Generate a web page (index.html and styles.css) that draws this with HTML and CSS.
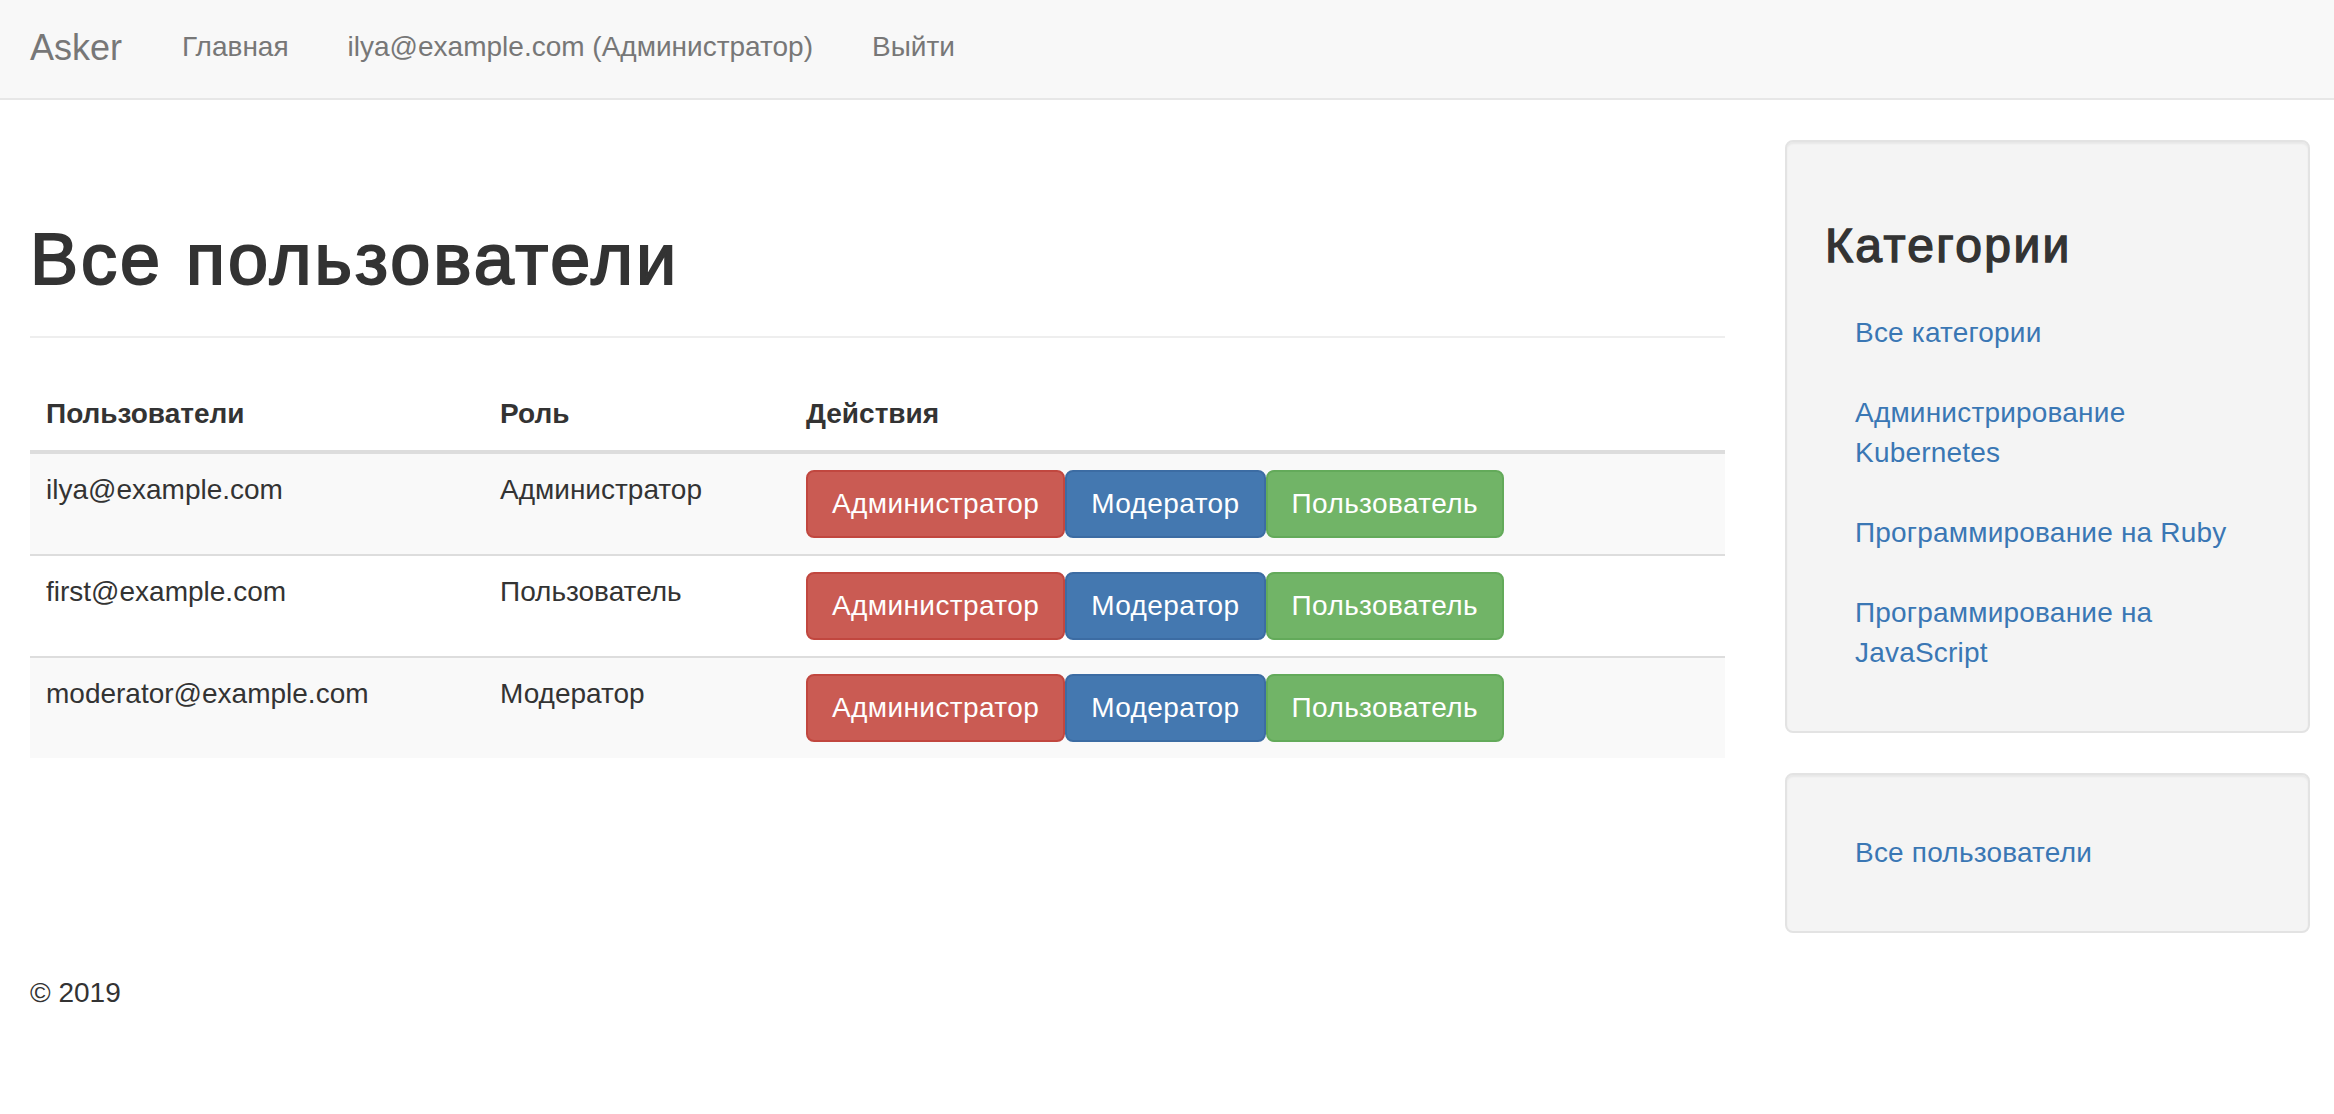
FILE: index.html
```html
<!DOCTYPE html>
<html lang="ru">
<head>
<meta charset="utf-8">
<title>Asker</title>
<link rel="stylesheet" href="styles.css">
</head>
<body>
<nav class="navbar">
  <a class="brand" href="#">Asker</a>
  <ul class="nav">
    <li><a href="#">Главная</a></li>
    <li><a href="#">ilya@example.com (Администратор)</a></li>
    <li><a href="#">Выйти</a></li>
  </ul>
</nav>
<div class="container">
  <div class="row">
    <main class="main">
      <div class="page-header"><h1>Все пользователи</h1></div>
      <table class="table">
        <thead>
          <tr><th class="col-user">Пользователи</th><th class="col-role">Роль</th><th>Действия</th></tr>
        </thead>
        <tbody>
          <tr>
            <td>ilya@example.com</td><td>Администратор</td>
            <td><div class="actions"><button class="btn btn-danger">Администратор</button><button class="btn btn-primary">Модератор</button><button class="btn btn-success">Пользователь</button></div></td>
          </tr>
          <tr>
            <td>first@example.com</td><td>Пользователь</td>
            <td><div class="actions"><button class="btn btn-danger">Администратор</button><button class="btn btn-primary">Модератор</button><button class="btn btn-success">Пользователь</button></div></td>
          </tr>
          <tr>
            <td>moderator@example.com</td><td>Модератор</td>
            <td><div class="actions"><button class="btn btn-danger">Администратор</button><button class="btn btn-primary">Модератор</button><button class="btn btn-success">Пользователь</button></div></td>
          </tr>
        </tbody>
      </table>
    </main>
    <aside class="sidebar">
      <div class="well">
        <h3>Категории</h3>
        <ul class="links">
          <li><a href="#">Все категории</a></li>
          <li><a href="#">Администрирование Kubernetes</a></li>
          <li><a href="#">Программирование на Ruby</a></li>
          <li><a href="#">Программирование на JavaScript</a></li>
        </ul>
      </div>
      <div class="well">
        <ul class="links links-top">
          <li><a href="#">Все пользователи</a></li>
        </ul>
      </div>
    </aside>
  </div>
  <footer class="footer">© 2019</footer>
</div>
</body>
</html>
```
FILE: styles.css
```css
* { box-sizing: border-box; }
html, body { margin: 0; padding: 0; background: #fff; }
body {
  font-family: "Liberation Sans", Helvetica, Arial, sans-serif;
  font-size: 28px;
  line-height: 40px;
  color: #333;
}
a { text-decoration: none; }

.navbar {
  display: flex;
  align-items: flex-start;
  height: 100px;
  padding: 0 30px;
  background: #f8f8f8;
  border-bottom: 2px solid #e7e7e7;
  margin-bottom: 40px;
}
.brand {
  font-size: 36px;
  line-height: 40px;
  color: #777;
  padding: 28px 30px 0 0;
}
.nav {
  display: flex;
  list-style: none;
  margin: 0;
  padding: 0;
}
.nav a {
  display: block;
  color: #777;
  padding: 27px 29px 0 30px;
}

.container { padding: 0 30px; }
.row { display: flex; gap: 60px; }
.main { width: 1695px; flex: none; }
.sidebar { width: 525px; flex: none; }

.page-header {
  margin: 80px 0 40px;
  padding-bottom: 17px;
  border-bottom: 2px solid #eee;
}
.page-header h1 {
  margin: 0 0 20px;
  font-size: 72px;
  line-height: 1.1;
  font-weight: 500;
  letter-spacing: 3px;
  -webkit-text-stroke: 2px #333;
}

.table {
  width: 100%;
  border-collapse: collapse;
  border-spacing: 0;
}
.table th {
  text-align: left;
  font-weight: bold;
  padding: 16px;
  vertical-align: bottom;
  border-bottom: 4px solid #ddd;
}
.table .col-user { width: 454px; }
.table .col-role { width: 306px; }
.table td {
  padding: 16px;
  vertical-align: top;
  border-top: 2px solid #ddd;
}
.table tbody tr:nth-child(odd) { background: #f9f9f9; }

.actions { display: flex; }
.btn {
  font-family: inherit;
  font-size: 28px;
  line-height: 40px;
  letter-spacing: 0.4px;
  padding: 12px 24px;
  border: 2px solid transparent;
  border-radius: 8px;
  color: #fff;
  margin: 0;
}
.btn-danger { background: #ca5b53; border-color: #c1473f; }
.btn-primary { background: #4478b0; border-color: #3c6ca3; }
.btn-success { background: #71b467; border-color: #63aa5a; }

.well {
  background: #f4f4f4;
  border: 2px solid #e3e3e3;
  border-radius: 8px;
  box-shadow: inset 0 2px 2px rgba(0,0,0,.05);
  padding: 38px;
  margin-bottom: 40px;
}
.well h3 {
  margin: 40px 0 40px;
  font-size: 48px;
  line-height: 1.1;
  font-weight: 500;
  letter-spacing: 2.4px;
  -webkit-text-stroke: 1.4px #333;
}
.links {
  list-style: none;
  margin: 0 0 20px;
  padding: 0 30px;
  display: flex;
  flex-direction: column;
  gap: 40px;
}
.links-top { margin-top: 20px; }
.links a { color: #3a77b4; letter-spacing: 0.2px; }

.footer { line-height: 40px; }
```
